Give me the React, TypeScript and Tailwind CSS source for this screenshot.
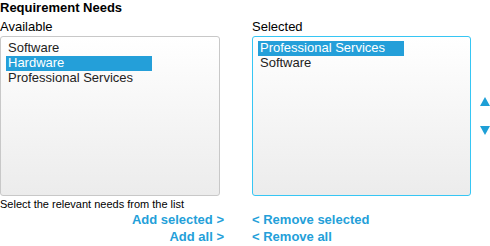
import React from "react";

function ListBox({ items, selected, focused }: { items: string[]; selected: number; focused?: boolean }) {
  return (
    <div
      className={`h-[160px] rounded-[3px] border bg-gradient-to-b from-white to-[#ececec] px-[5px] pt-[4px] ${
        focused ? "border-[#36c6f4]" : "border-[#c8c8c8]"
      }`}
    >
      {items.map((it, i) => (
        <div
          key={it}
          className={`h-[15px] w-[146px] pl-[2px] text-[13px] leading-[14px] ${
            i === selected ? "bg-[#249fd9] text-white" : "text-[#222]"
          }`}
        >
          {it}
        </div>
      ))}
    </div>
  );
}

export default function App() {
  return (
    <div className="w-[490px] h-[246px] bg-white font-['Liberation_Sans',Arial,sans-serif] text-black">
      <div className="text-[13px] font-bold leading-[15px] h-[17px]">Requirement Needs</div>
      <div className="flex">
        <div className="w-[220px]">
          <div className="text-[13px] leading-[19px] h-[19px]">Available</div>
          <ListBox items={["Software", "Hardware", "Professional Services"]} selected={1} />
          <div className="text-[11px] leading-[14px] mt-[1px]">Select the relevant needs from the list</div>
        </div>
        <div className="w-[219px] ml-[32px]">
          <div className="text-[13px] leading-[19px] h-[19px]">Selected</div>
          <ListBox items={["Professional Services", "Software"]} selected={0} focused />
        </div>
        <div className="flex flex-col items-center ml-[9px] pt-[80px] gap-[20px]">
          <svg width="10" height="9" viewBox="0 0 10 9">
            <polygon points="5,0 10,9 0,9" fill="#1e9fd6" />
          </svg>
          <svg width="10" height="9" viewBox="0 0 10 9">
            <polygon points="0,0 10,0 5,9" fill="#1e9fd6" />
          </svg>
        </div>
      </div>
      <div className="flex text-[13px] font-bold leading-[17px] text-[#249fd9]">
        <div className="w-[224px] flex flex-col items-end">
          <span>Add selected &gt;</span>
          <span>Add all &gt;</span>
        </div>
        <div className="ml-[28px] flex flex-col items-start">
          <span>&lt; Remove selected</span>
          <span>&lt; Remove all</span>
        </div>
      </div>
    </div>
  );
}
